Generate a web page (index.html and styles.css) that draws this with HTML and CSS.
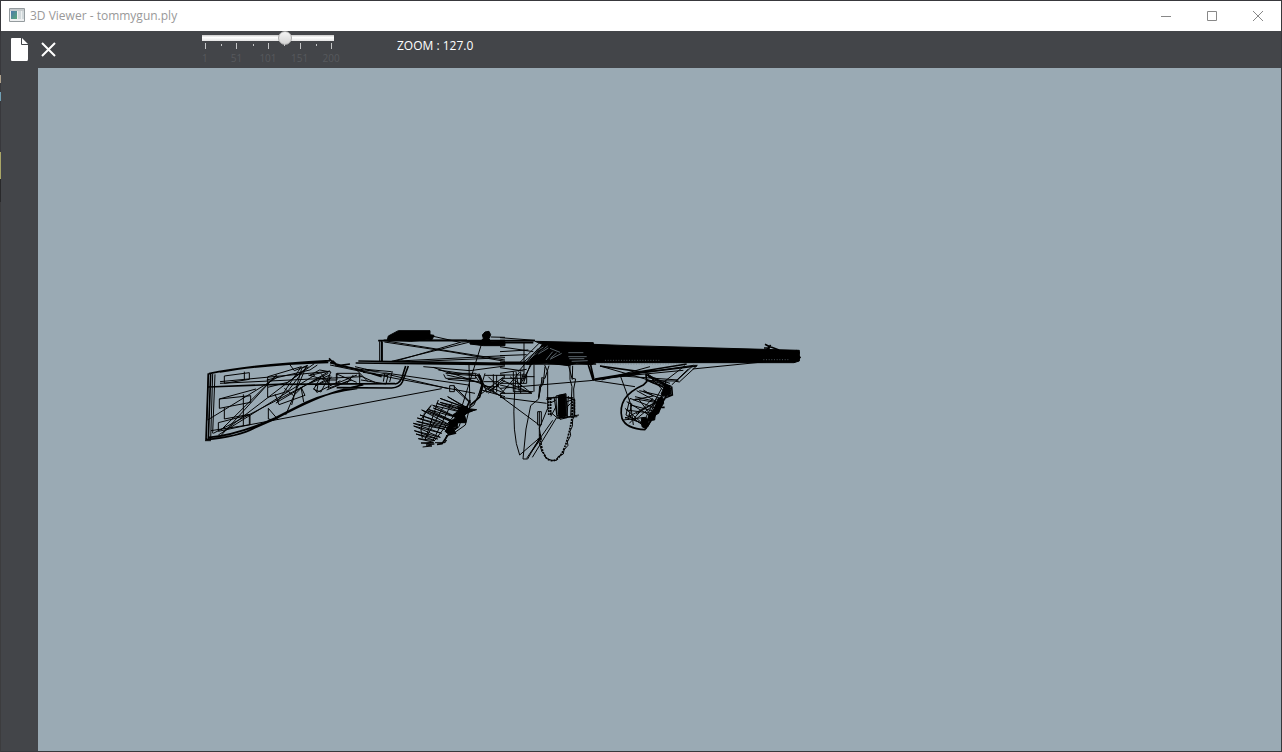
FILE: index.html
```html
<!DOCTYPE html>
<html lang="en">
<head>
<meta charset="utf-8">
<title>3D Viewer - tommygun.ply</title>
<link rel="stylesheet" href="styles.css">
</head>
<body>
<div class="window">
  <header class="titlebar">
    <svg class="app-icon" width="16" height="14" viewBox="0 0 16 14" aria-hidden="true">
      <defs><linearGradient id="app" x1="0" y1="0" x2="1" y2="1"><stop offset="0" stop-color="#4b79ad"/><stop offset="1" stop-color="#59a878"/></linearGradient></defs>
      <path d="M.5.5h15v13H.5z" fill="#eef0f1" stroke="#949b9e"/>
      <path d="M1 1h14v2H1z" fill="#c5cacc"/>
      <path d="M2 3h6v8H2z" fill="url(#app)"/>
      <path d="M9 3h3v8H9zM13 3h2v8h-2z" fill="#d1d9db"/>
    </svg>
    <h1 class="title">3D Viewer - tommygun.ply</h1>
    <div class="controls">
      <button class="control" aria-label="Minimize"><svg width="10" height="10" viewBox="0 0 10 10"><path d="M0 5.5h10"/></svg></button>
      <button class="control" aria-label="Maximize"><svg width="10" height="10" viewBox="0 0 10 10"><path d="M.5.5h9v9h-9z"/></svg></button>
      <button class="control" aria-label="Close"><svg width="10" height="10" viewBox="0 0 10 10"><path d="M0 0l10 10M10 0L0 10"/></svg></button>
    </div>
  </header>
  <div class="toolbar">
    <button class="tool" aria-label="Open file"><svg width="17" height="23" viewBox="0 0 17 23"><path d="M1 0h9v6q0 1 1 1h6v14q0 2-1 2H1q-1 0-1-1V1q0-1 1-1zM11 0l6 6h-6z" fill="#fff"/></svg></button>
    <button class="tool" aria-label="Close model"><svg width="15" height="15" viewBox="0 0 15 15"><path d="M1 1l13 13M14 1L1 14" stroke="#fff" stroke-width="2" fill="none"/></svg></button>
    <div class="slider">
      <input class="range" type="range" min="1" max="200" value="127" aria-label="Zoom">
      <svg class="ticks" width="140" height="6" viewBox="0 0 140 6" aria-hidden="true"><path d="M7.500 0v6M38.500 0v6M70.500 0v6M102.500 0v6M133.500 0v6M23.500 1v2M55.500 1v2M86.500 1v2M118.500 1v2"/></svg>
      <div class="scale"><span>1</span><span>51</span><span>101</span><span>151</span><span>200</span></div>
    </div>
    <output class="zoom">ZOOM : 127.0</output>
  </div>
  <div class="body">
    <aside class="rail"></aside>
    <main class="viewport">
      <svg class="model" viewBox="38 68 1243 683" preserveAspectRatio="xMinYMin meet" role="img" aria-label="Wireframe model">
        <!-- Stock, rear grip and receiver -->
        <g transform="translate(195 320) scale(.33333)">
          <path class="bold" d="M40 160L33 360M47 162L40 355M42 161Q160 135 405 122M75 156Q200 133 400 127M31 359Q130 350 180 323L240 297Q370 228 440 210L505 194M38 353Q130 345 240 294L330 248Q410 213 487 205M41 201L250 193 600 191M425 203L590 204Q615 202 622 186L640 138M600 192Q618 190 625 160L632 138M402 115L416 130 430 137 465 132M412 122L428 136M405 128L520 157 560 170M490 123L930 130M482 129L930 134M560 62V125M550 62H930M825 70H930"/>
          <path d="M53 162L47 358M60 163L53 340M40 162L36 300M30 362h18M38 300L250 170M88 168v22M88 168l75-10v20l-75 12M148 155v25M75 185l320-30M75 190L500 170M73 237v28l94-18v-20L73 237l110-30M88 263v34l75-14v30M70 308v26l95-20v-30L70 308M145 223v95M48 332L160 315 740 206M70 345l290-180M85 335L340 140M78 330L245 165 230 180 75 350M55 340L400 160M218 170v32l60-15 80-56M218 202v30l60-18 60-78-40 16-15-20M240 222l12 32 78-28-12-25 8 45M220 265v32l16 3M220 265l30 35M268 205l28 22 28-28M244 250l75-110-100 30M215 180l130-30 22-15M272 285l63-148M290 255l30-110 14-6M244 248l160-95-60 13 30-16 34 6-30 60-22-8 22-38M340 165l50 15-30 18 44-20M345 190l60-25-5 40M356 205l10 12 70-35M365 217l4-24M378 160l30 38M390 180h36v-20h68v30M410 170l-15 20M424 160v32M425 162l60 25M426 190l60-25M475 165l-20 25M490 165l50 22M485 150l34 35M504 157l75 10-6 25-75-12M570 157l-5 28M592 154l-8 32M590 155l-80-7M400 205l60-22M395 210l75-30M405 135L600 175 840 220M480 140l280 66M420 137l400 58"/>
          <path class="gray" d="M510 155h65l-3 5-60-3z"/>
          <path class="solid" d="M580 48l30-16h95v12l12 2-5 12-65 6-70-5zM862 45l8-9 12-2 5 10-5 12 5 8h-30l8-9zM825 62l105 3v12H865l-40-5z"/>
          <path d="M562 66v58M554 64v60M550 62h18L930 120M568 66l200 30 162 28M590 124L825 66M600 124L800 66l60-4M715 49l80 18M887 51l43 1M858 77L800 262M590 124l340-17M650 125l280-12M566 60h250"/>
          <path d="M685 140l140 12 105-14M715 142l55 20 70 5M730 150l125 18M752 160h90v15h-90l-6-12M758 178l95 8-10-15M764 197h14v18h-14zM776 198l52 50M778 205l45 42M822 135l3 125M760 156l90 32 80 32M755 165l100 22 75 50M870 166h60M880 170l50 50M880 220l50-48M895 163v55M905 165v52M870 160l-20 68 80-60M855 165l20 52 55-35M860 210l70 20M865 185h45v15h-45l55 30M845 160l10 20 7 25-8 25-28 25-15 60-35 25M852 160l10 30-5 20-20 45-30 20-15 45-25 20"/>
          <path class="bold" d="M850 163l14 30-10 38-28 25M825 240l-12 28 20 3-26 12 5 20-30 5 5 14-20 10 12 8-20 5-18 26-15 2"/>
          <path d="M758 230l62 35-85-30 85 32-85-20 75 25-85-22 80 28-92-22 80 40-78-32 75 30-88-25 80 38-85-35 78 35-95-37 85 45-90-30 90 35-98-26 90 30-92-20 85 24-95-18 85 30-84-22 80 34-78-20 70 25-65-15 57 20-50-6 46 11-38 2 40 3-25 3 18 3-28 3M758 230l58 36M710 254l-22 26-10 50 4 25M708 258l-30 40M730 240l-40 120M745 260l-50 90M770 250l-55 110M790 270l-70 90M755 345l-6 24M720 368h30l5-8"/>
          <path class="solid" d="M788 262l28-3 4 7 25 3-25 7-12 10 5 22-24 0-3 10-12 6 8 14-22 4-10-8 12-18 0-10 20-12-8-10 18-10z"/>
        </g>
        <!-- Barrel, drum and foregrip -->
        <g transform="translate(500 320) scale(.33333)">
          <path class="solid" d="M105 64l175 4v5l110 4 508 14v32l-16 5H285l-10 6-45-5-25 8-65-8-60 4 25-30 22-30z"/>
          <path class="gap" d="M158 95l-20 25M170 99l-18 15M185 100l-35 18M205 98h45M205 110h55M208 116h45M100 98l30-17M115 102l30-18M215 124l48-2M150 85l30 12M83 120l60-42"/>
          <path class="cut" d="M315 121h165M288 132h268M790 119h75"/>
          <path class="bold" d="M0 62h105M0 68h100M0 127h105M0 132h288M280 72v60M265 135l14 44M272 135l10 44M278 180L430 157 590 138M285 177L560 132M300 138l140 20M795 73l15 8-10 10 12-16M792 84h18M805 78l32 12M887 91l10 7-4 8 7 6-8 10"/>
          <path d="M0 53l105 8M0 80l100 15M0 95l85-5M0 107l80-3M72 68v115M102 135v80M60 127l60-60M70 127l70-60M80 127l60-50M55 155l60-70M70 190l30-80M0 205l270-23M0 232l140 18M0 228l115 85M0 143l70 10M0 160l80-12M0 165h80v25H0M5 175h70M40 155v60h60M0 220h95L0 178M0 195l95 22M30 170l65 50M0 225l60-70M48 155l10 60M62 155v65M65 170h38M70 160l-10 35 50-90"/>
          <path d="M44 215Q35 345 59 405L123 350M44 215l4-45M135 140l-5 50-8 12-6 35-24 20-14 70-9 90h14l36-64M147 137l-12 38-10-2 2 20-8 5-3 35 10-55M134 135l9 20v110l-25 60 6 35M210 133v45l6 22-4 90M205 134l12 45M113 275h11v40h-11zM118 275v85M97 412l72-118M95 395l30-42M80 415l40-60 38-54"/>
          <path d="M218 137l-1 38 10 2-6 30 2 80-5 12-1 20-7 15 2 12-10 20 2 10-12 14-2 12-16 8-4 11-15 0-18-7-2-10-9-8-12-40"/>
          <path class="bold dash" d="M120 342Q125 420 155 422T204 350T217 245"/>
          <path class="dash bold" d="M146 235v50M152 234v55M216 235v52M223 238v48"/>
          <path class="solid" d="M176 226l20-3 3 65-20 6-5-12z"/>
          <path d="M168 228l30-7 4 72-22 5-10-15zM138 238l38-8M140 233h80M142 268l30 26 60-4M175 295l62-10M200 232l24 8v50M200 245l25-8M200 262l12-12M168 240l-18 10M168 260l-15 28M162 230l10 66M205 228l-4 64"/>
          <path d="M270 182l150-20M285 182l120 18M305 180l145-40M362 170l33 90M300 138l215 62M365 168l170 12M440 182l95 1M430 158l150-22h12l-54 50-10-2 52-48M578 147l220-22M555 137l-65 50M515 195l50-48M290 176l260-25"/>
          <path class="bold" d="M438 165l2 20-10 10Q350 230 366 295 378 326 436 329M436 163l74 36M440 180l70 30"/>
          <path d="M440 160l70 45-65-35 65 20M452 172l38 40 8-30M465 172l-12 15 58 15M470 178l40 25M390 235l90 35M378 270l80 10M375 292l65 22M410 212l60 33-65-15M400 240l60-12-30-18M418 212l65 15M380 245l75 45M390 235l-12 50 40 22M376 295l90-48-60-10M388 310l70-75M400 315l-8-60 75 20M385 285l50 35 35-85M430 215l50 20M408 282l60-35M375 265l60 52M418 240l30 40M405 300l80-65M395 250l-10 50M370 300l65-8M485 205l-60 110M492 215l-48 105"/>
          <path class="bold" d="M510 195l-15 40-20 30-20 32-20 32M505 200l-33 48-38 76M515 200l2 25-24 10-15 35-20 25-20 30M505 205h12M500 225h18M480 262h14"/>
          <path class="solid" d="M495 198l15 5 3 18-22 8-8-7zM474 235l14-3 3 18-10 15-5 15-10 5-2 15-22 2 5-20 14-10 8-20zM424 295l16-2 3 15-5 18-12-6z"/>
        </g>
      </svg>
    </main>
  </div>
</div>
</body>
</html>
```
FILE: styles.css
```css
* { box-sizing: border-box; }
body { margin: 0; font-family: "Open Sans", "Noto Sans", sans-serif; }
.window {
  display: flex;
  flex-direction: column;
  height: 100vh;
  padding: 1px;
  background: linear-gradient(#38383c 0 75px, #afa18c 75px 83px, #38383c 83px 92px, #71a0b5 92px 101px, #38383c 101px 152px, #aaa667 152px 179px, #29292b 179px 202px, #3c3c3e 202px) left / 1px 100% no-repeat #38383c;
}
.titlebar { display: flex; align-items: center; height: 30px; flex: none; padding-left: 8px; background: #fff; }
.app-icon { margin-right: 5px; margin-bottom: 2px; }
.title { margin: 0; font-size: 12px; line-height: 16px; font-weight: 400; color: #999; }
.controls { display: flex; margin-left: auto; }
.control { display: grid; place-items: center; width: 46px; height: 29px; padding: 0; border: 0; background: none; }
.control path { fill: none; stroke: #888; stroke-width: 1; }
.toolbar { display: flex; align-items: center; height: 37px; flex: none; padding-left: 10px; gap: 13px; background: #434549; }
.tool { display: grid; place-items: center; padding: 0; border: 0; background: none; }
.slider { display: flex; flex-direction: column; align-items: center; width: 158px; margin-left: 120px; height: 37px; }
.range { appearance: none; width: 140px; height: 14px; margin: 0; background: none; }
.range::-webkit-slider-runnable-track { height: 14px; background: linear-gradient(#c8c8c8, #fff 40%, #e4e4e4) center / 132px 6px no-repeat; }
.range::-webkit-slider-thumb { appearance: none; width: 14px; height: 14px; border: 1px solid #aaa; border-radius: 50%; background: linear-gradient(#f4f4f4, #d4d4d4); }
.ticks { display: block; margin-top: -2px; }
.ticks path { fill: none; stroke: #c4c5c6; }
.scale { display: grid; grid-template-columns: repeat(5, 1fr); width: 100%; margin-top: 3px; font-size: 10px; line-height: 12px; text-align: center; color: #57595d; }
.zoom { margin-left: 37px; margin-bottom: 8px; font-size: 12px; line-height: 16px; color: #fff; }
.body { display: flex; flex: 1; min-height: 0; background: #434549; }
.rail { width: 37px; flex: none; }
.viewport { flex: 1; min-width: 0; background: #9aaab4; overflow: hidden; }
.model { display: block; width: 100%; height: 100%; }
.model path { fill: none; stroke: #000; stroke-width: 3; }
.model .bold { stroke-width: 5; }
.model .solid { fill: #000; }
.model .gray { fill: #555e64; stroke: none; }
.model .gap { stroke: #8595a0; stroke-width: 2; }
.model .cut { stroke: #69757d; stroke-dasharray: 3 5; stroke-width: 2; }
.model .dash { stroke-dasharray: 6 3; }
```
